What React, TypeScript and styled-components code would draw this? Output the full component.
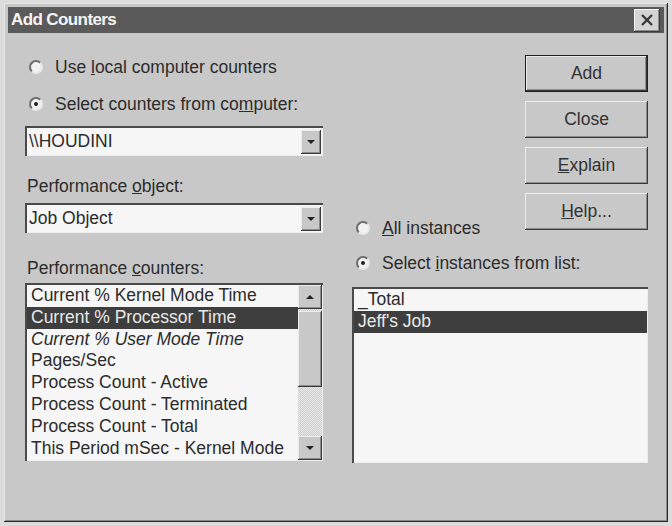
import React from 'react';
import styled, { createGlobalStyle } from 'styled-components';

const GlobalStyle = createGlobalStyle`
  html, body {
    margin: 0;
    padding: 0;
    background: #dcdcdc;
    font-family: "Liberation Sans", Arial, sans-serif;
  }
`;

const counters = [
  { label: 'Current % Kernel Mode Time' },
  { label: 'Current % Processor Time', selected: true },
  { label: 'Current % User Mode Time', italic: true },
  { label: 'Pages/Sec' },
  { label: 'Process Count - Active' },
  { label: 'Process Count - Terminated' },
  { label: 'Process Count - Total' },
  { label: 'This Period mSec - Kernel Mode' },
];

const instances = [{ label: '_Total' }, { label: "Jeff's Job", selected: true }];

function Radio({ checked, children }: { checked?: boolean; children: React.ReactNode }) {
  return (
    <RadioRow>
      <RadioDot $checked={checked} />
      <span>{children}</span>
    </RadioRow>
  );
}

function Combo({ value }: { value: string }) {
  return (
    <ComboBox>
      <ComboText>{value}</ComboText>
      <DropButton>
        <ArrowDown />
      </DropButton>
    </ComboBox>
  );
}

export default function App() {
  return (
    <>
      <GlobalStyle />
      <Window>
        <TitleBar>
          <Title>Add Counters</Title>
          <CloseBox>
            <svg width="14" height="12" viewBox="0 0 14 12">
              <path d="M2 1 L12 11 M12 1 L2 11" stroke="#3a3a3a" strokeWidth="2.4" />
            </svg>
          </CloseBox>
        </TitleBar>

        <Body>
          <LeftCol>
            <Spaced $top={24}>
              <Radio>
                Use <u>l</u>ocal computer counters
              </Radio>
            </Spaced>
            <Spaced $top={17}>
              <Radio checked>
                Select counters from co<u>m</u>puter:
              </Radio>
            </Spaced>
            <Spaced $top={12}>
              <Combo value="\\HOUDINI" />
            </Spaced>
            <Spaced $top={20}>
              <FieldLabel>
                Performance <u>o</u>bject:
              </FieldLabel>
            </Spaced>
            <Spaced $top={7}>
              <Combo value="Job Object" />
            </Spaced>
            <Spaced $top={25}>
              <FieldLabel>
                Performance <u>c</u>ounters:
              </FieldLabel>
            </Spaced>
            <Spaced $top={5}>
              <ListBox>
                <ListItems>
                  {counters.map((c) => (
                    <Item key={c.label} $selected={c.selected} $italic={c.italic}>
                      {c.label}
                    </Item>
                  ))}
                </ListItems>
                <ScrollBar>
                  <ScrollButton>
                    <ArrowUp />
                  </ScrollButton>
                  <Thumb />
                  <Track />
                  <ScrollButton>
                    <ArrowDown />
                  </ScrollButton>
                </ScrollBar>
              </ListBox>
            </Spaced>
          </LeftCol>

          <RightCol>
            <AllRadio>
              <Radio>
                <u>A</u>ll instances
              </Radio>
            </AllRadio>
            <Buttons>
              <Button $default>Add</Button>
              <Button>Close</Button>
              <Button>
                <u>E</u>xplain
              </Button>
              <Button>
                <u>H</u>elp...
              </Button>
            </Buttons>
            <Wide $top={15}>
              <Radio checked>
                Select <u>i</u>nstances from list:
              </Radio>
            </Wide>
            <Wide $top={14}>
              <InstanceList>
                {instances.map((i) => (
                  <Item key={i.label} $selected={i.selected}>
                    {i.label}
                  </Item>
                ))}
              </InstanceList>
            </Wide>
          </RightCol>
        </Body>
      </Window>
    </>
  );
}

const Window = styled.div`
  box-sizing: border-box;
  margin: 3px 0 0 4px;
  width: 664px;
  height: 519px;
  padding: 4px;
  background: #c8c8c8;
  box-shadow: inset -1px -1px 0 #2a2a2a, inset 1px 1px 0 #e6e6e6, inset -2px -2px 0 #8a8a8a;
  display: flex;
  flex-direction: column;
`;

const TitleBar = styled.div`
  height: 26px;
  background: #5a5a5a;
  display: flex;
  align-items: center;
  justify-content: space-between;
  padding: 0 4px 0 3px;
`;

const Title = styled.span`
  color: #f4f4f4;
  font-weight: 700;
  font-size: 17px;
  letter-spacing: -0.6px;
`;

const CloseBox = styled.span`
  box-sizing: border-box;
  width: 26px;
  height: 23px;
  background: #d4d4d4;
  box-shadow: inset -1px -1px 0 #3a3a3a, inset 1px 1px 0 #f4f4f4, inset -2px -2px 0 #8e8e8e;
  display: grid;
  place-items: center;
`;

const Body = styled.div`
  flex: 1;
  display: grid;
  grid-template-columns: 298px 296px;
  column-gap: 29px;
  padding: 0 16px 0 17px;
  color: #2c2c2c;
  font-size: 17.5px;
`;

const LeftCol = styled.div`
  display: flex;
  flex-direction: column;
`;

const Spaced = styled.div<{ $top: number }>`
  margin-top: ${(p) => p.$top}px;
`;

const RadioRow = styled.label`
  height: 20px;
  display: flex;
  align-items: center;
  gap: 12px;
  padding-left: 4px;
  white-space: nowrap;
`;

const RadioDot = styled.span<{ $checked?: boolean }>`
  box-sizing: border-box;
  width: 14px;
  height: 14px;
  border-radius: 50%;
  background: #f2f2f2;
  border: 2px solid #6c6c6c;
  border-right-color: #e8e8e8;
  border-bottom-color: #e8e8e8;
  display: grid;
  place-items: center;
  &::after {
    content: '';
    width: 4px;
    height: 4px;
    border-radius: 50%;
    background: #222;
    display: ${(p) => (p.$checked ? 'block' : 'none')};
  }
`;

const FieldLabel = styled.div`
  height: 20px;
  line-height: 20px;
  padding-left: 2px;
`;

const ComboBox = styled.div`
  box-sizing: border-box;
  height: 30px;
  background: #f6f6f6;
  box-shadow: inset 2px 2px 0 #4a4a4a, inset -1px -1px 0 #eeeeee;
  display: flex;
  align-items: center;
  padding: 3px 2px 2px 4px;
`;

const ComboText = styled.span`
  flex: 1;
`;

const DropButton = styled.span`
  box-sizing: border-box;
  width: 20px;
  height: 24px;
  background: #c8c8c8;
  box-shadow: inset -1px -1px 0 #3a3a3a, inset 1px 1px 0 #ececec, inset -2px -2px 0 #8c8c8c;
  display: grid;
  place-items: center;
`;

const ArrowDown = styled.span`
  width: 0;
  height: 0;
  border-left: 4px solid transparent;
  border-right: 4px solid transparent;
  border-top: 4px solid #222;
`;

const ArrowUp = styled.span`
  width: 0;
  height: 0;
  border-left: 4px solid transparent;
  border-right: 4px solid transparent;
  border-bottom: 4px solid #222;
`;

const ListBox = styled.div`
  box-sizing: border-box;
  height: 178px;
  background: #f6f6f6;
  box-shadow: inset 2px 2px 0 #4a4a4a, inset -1px -1px 0 #eeeeee;
  padding: 2px 1px 1px 2px;
  display: flex;
`;

const ListItems = styled.div`
  flex: 1;
  overflow: hidden;
  padding-top: 0;
`;

const Item = styled.div<{ $selected?: boolean; $italic?: boolean }>`
  height: 21.8px;
  line-height: 21.8px;
  padding-left: 4px;
  white-space: nowrap;
  font-style: ${(p) => (p.$italic ? 'italic' : 'normal')};
  background: ${(p) => (p.$selected ? '#3e3e3e' : 'transparent')};
  color: ${(p) => (p.$selected ? '#e8e8e8' : '#2c2c2c')};
`;

const ScrollBar = styled.div`
  width: 24px;
  display: flex;
  flex-direction: column;
  background: repeating-conic-gradient(#e6e6e6 0 25%, #cfcfcf 0 50%) 0 0 / 2px 2px;
`;

const ScrollButton = styled.span`
  box-sizing: border-box;
  height: 24px;
  background: #c8c8c8;
  box-shadow: inset -1px -1px 0 #3a3a3a, inset 1px 1px 0 #ececec, inset -2px -2px 0 #8c8c8c;
  display: grid;
  place-items: center;
`;

const Thumb = styled.span`
  box-sizing: border-box;
  height: 76px;
  margin-top: 2px;
  background: #c8c8c8;
  box-shadow: inset -1px -1px 0 #3a3a3a, inset 1px 1px 0 #ececec, inset -2px -2px 0 #8c8c8c;
`;

const Track = styled.span`
  flex: 1;
`;

const RightCol = styled.div`
  display: grid;
  grid-template-columns: 1fr 123px;
  align-content: start;
`;

const Buttons = styled.div`
  margin-top: 22px;
  padding-bottom: 8px;
  display: flex;
  flex-direction: column;
  gap: 9px;
`;

const AllRadio = styled.div`
  align-self: end;
`;

const Button = styled.button<{ $default?: boolean }>`
  box-sizing: border-box;
  height: 37px;
  font: inherit;
  color: #333;
  background: #c8c8c8;
  border: ${(p) => (p.$default ? '1px solid #1e1e1e' : 'none')};
  box-shadow: inset -1px -1px 0 #3a3a3a, inset 1px 1px 0 #ececec, inset -2px -2px 0 #8c8c8c;
  padding: 0;
`;

const Wide = styled.div<{ $top: number }>`
  grid-column: 1 / -1;
  margin-top: ${(p) => p.$top}px;
`;

const InstanceList = styled.div`
  box-sizing: border-box;
  height: 176px;
  background: #f6f6f6;
  box-shadow: inset 2px 2px 0 #4a4a4a, inset -1px -1px 0 #eeeeee;
  padding: 2px 1px 1px 2px;
`;
